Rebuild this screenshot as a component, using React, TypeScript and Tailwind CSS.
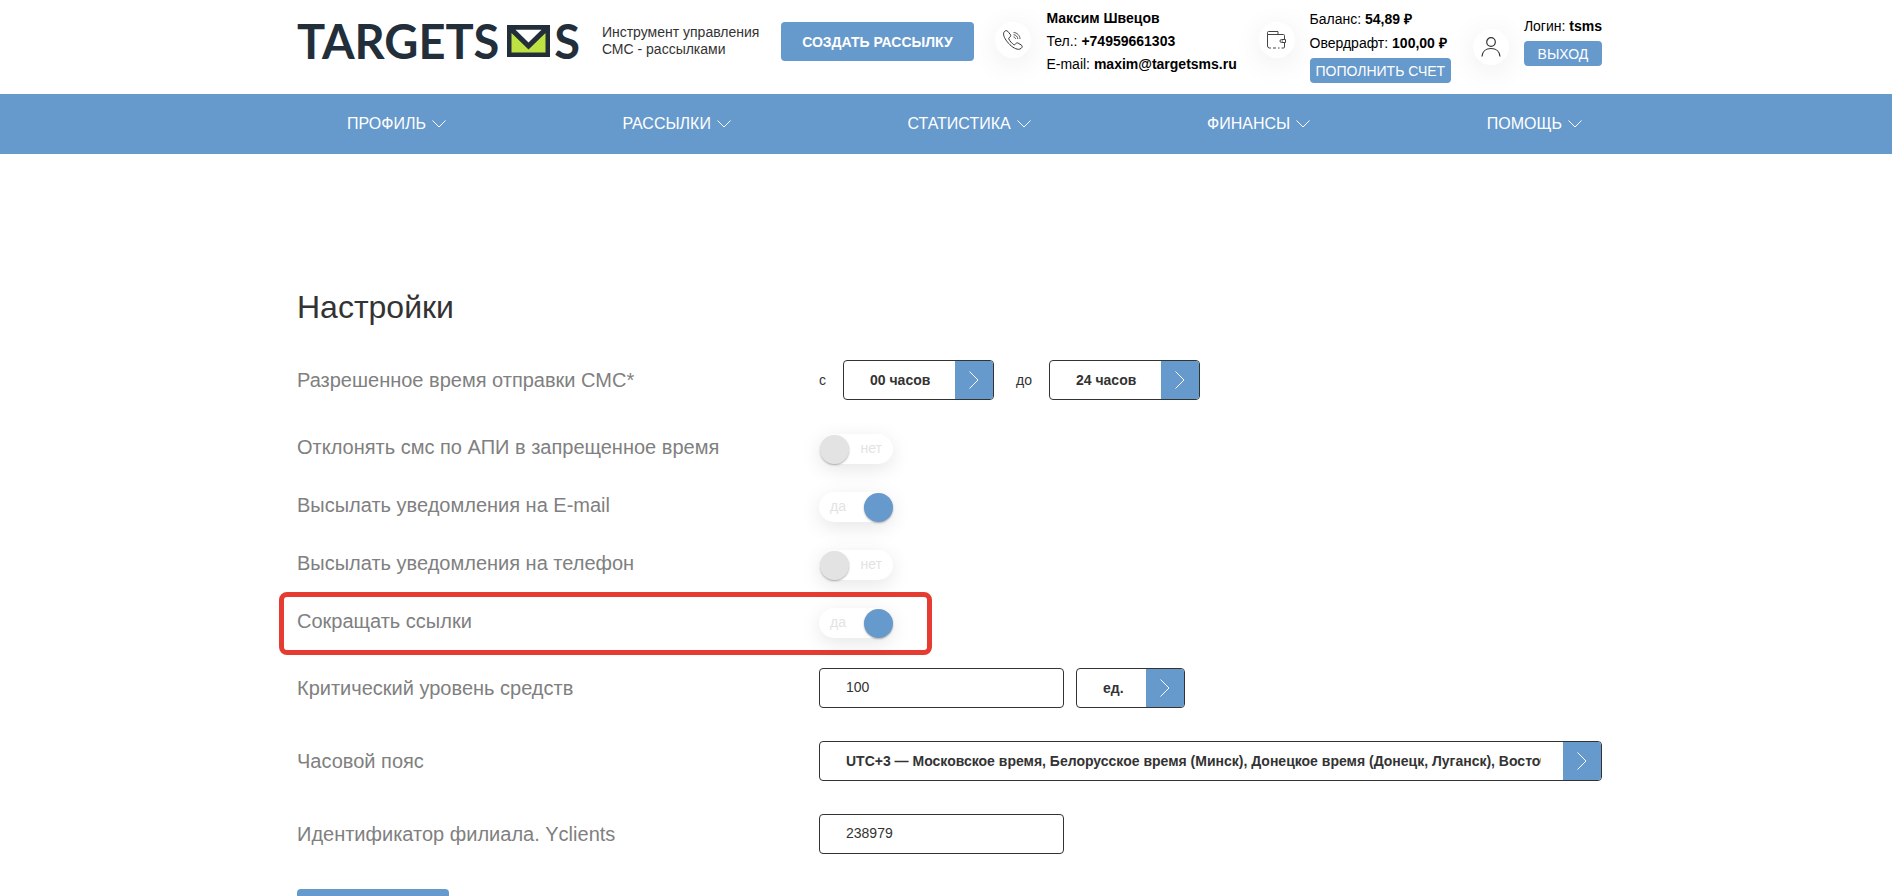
import { useState } from "react";
import type { ReactNode } from "react";
import clsx from "clsx";

const NAV_ITEMS = ["ПРОФИЛЬ", "РАССЫЛКИ", "СТАТИСТИКА", "ФИНАНСЫ", "ПОМОЩЬ"];

const TOGGLES = [
  { id: "reject-api", label: "Отклонять смс по АПИ в запрещенное время", on: false },
  { id: "notify-email", label: "Высылать уведомления на E-mail", on: true },
  { id: "notify-phone", label: "Высылать уведомления на телефон", on: false },
  { id: "short-links", label: "Сокращать ссылки", on: true, highlight: true },
];

function Logo() {
  return (
    <a href="#" className="flex items-center font-[Lato,sans-serif] text-[47px] leading-[46px] font-bold text-[#222e3a]">
      <span>TARGETS</span>
      <svg width="43" height="32" viewBox="0 0 43 32" className="mr-1 ml-2">
        <rect width="43" height="32" fill="#222e3a" />
        <path d="M4.500 8 21.500 24.500 38.500 8V27.500H4.500z" fill="#bfe243" />
        <path d="M8.500 4.700H34.500L21.500 17.500z" fill="#fff" />
      </svg>
      <span>S</span>
    </a>
  );
}

function PhoneIcon() {
  return (
    <svg width="22" height="22" viewBox="0 0 22 22" fill="none" stroke="#333" strokeWidth="1">
      <path d="M4.800 1.800C3.700 1.200 2.500 2.200 1.900 3.300 1 5.500 2 8.700 5.200 12.700 8.800 17.200 13 20.200 16.500 20.300c1.800 0 3.600-1.300 3.700-2.600.1-.8-.4-1.300-1-1.700l-3.100-1.900c-.9-.5-1.700-.3-2.300.5l-.7.9c-.4.4-.9.400-1.400.1-1.900-1.300-3.900-3.600-4.900-5.600-.2-.5-.1-1 .3-1.300l.9-.7c.7-.6.9-1.300.5-2.200L6.600 3.300c-.4-.8-1-1.200-1.800-1.500z" />
      <path d="M11.500 3.500c3.500 0 6.500 3 6.500 6.500M11.500 5.700c2.300 0 4.300 2 4.300 4.300M11.500 7.900c1.100 0 2.100 1 2.100 2.100" strokeWidth=".8" />
    </svg>
  );
}

function WalletIcon() {
  return (
    <svg width="20" height="18" viewBox="0 0 20 18" fill="none" stroke="#444" strokeWidth="1">
      <path d="M.5 3.500h16a1 1 0 0 1 1 1v4M.5 3.500V1.500a1 1 0 0 1 1-1h9.500v3M.5 3.500v11.500a2 2 0 0 0 2 2h1.500M6 17h3M11 17h1.500M14.500 17h2a1 1 0 0 0 1-1v-4.500" />
      <path d="M14.500 8.500h4v3h-4a1.500 1.500 0 0 1 0-3zM14.500 10h1.500" />
    </svg>
  );
}

function UserIcon() {
  return (
    <svg width="20" height="20" viewBox="0 0 20 20" fill="none" stroke="#333" strokeWidth="1.200">
      <circle cx="10" cy="5" r="4.300" />
      <path d="M1 19.500C1.300 14.500 5 11.500 10 11.500s8.700 3 9 8" />
    </svg>
  );
}

function IconCircle({ children }: { children: ReactNode }) {
  return (
    <span className="flex size-9 shrink-0 items-center justify-center rounded-full bg-white shadow-[0_5px_30px_rgba(0,0,0,0.08)]">
      {children}
    </span>
  );
}

function Select({ label, options, className }: { label: string; options: string[]; className?: string }) {
  return (
    <span className={clsx("relative inline-flex h-10", className)}>
      <select
        aria-label={label}
        className="w-full appearance-none rounded border border-[#333] bg-white pr-[60px] pl-[26px] text-sm font-bold text-[#333] outline-none"
      >
        {options.map((option) => (
          <option key={option}>{option}</option>
        ))}
      </select>
      <span className="pointer-events-none absolute inset-y-px right-px flex w-[38px] items-center justify-center rounded-r-[3px] bg-[#6699cc]">
        <svg width="10" height="18" viewBox="0 0 10 18" fill="none" stroke="#fff">
          <path d="M.5.500 9 9 .5 17.500" />
        </svg>
      </span>
    </span>
  );
}

function TextField({ id, value }: { id: string; value: string }) {
  return (
    <input
      id={id}
      type="text"
      defaultValue={value}
      className="h-10 w-[245px] rounded border border-[#333] bg-white px-[26px] pb-0.5 text-sm text-[#333] outline-none"
    />
  );
}

function Toggle({ id, initial }: { id: string; initial: boolean }) {
  const [on, setOn] = useState(initial);

  return (
    <label className="relative block h-[30px] w-[74px] cursor-pointer rounded-full bg-white text-sm leading-[28px] text-[#e3e3e3] shadow-[0_5px_20px_rgba(0,0,0,0.1)]">
      <input id={id} type="checkbox" checked={on} onChange={() => setOn(!on)} className="sr-only" />
      <span className={clsx("block px-[11px]", on ? "text-left" : "text-right")}>{on ? "да" : "нет"}</span>
      <span
        className={clsx(
          "absolute top-px size-[29px] rounded-full shadow-[0_1px_2px_rgba(0,0,0,0.3)]",
          on ? "right-0 bg-[#6699cc]" : "left-px bg-[#e3e3e3]",
        )}
      />
    </label>
  );
}

function Row({ label, htmlFor, children }: { label: string; htmlFor?: string; children: ReactNode }) {
  return (
    <div className="flex items-center">
      <label htmlFor={htmlFor} className="w-2/5 text-xl leading-6 text-[#808080]">
        {label}
      </label>
      <div className="flex w-3/5 items-center">{children}</div>
    </div>
  );
}

export default function App() {
  return (
    <div className="h-screen overflow-hidden bg-white font-['Liberation_Sans',Arial,sans-serif] text-[#333]">
      {/* Header */}
      <header className="pl-[7px]">
        <div className="mx-auto flex h-[94px] max-w-[1305px] items-start justify-between text-sm text-black">
          <div className="pt-[18px]">
            <Logo />
          </div>
          <p className="pt-6 leading-[17px] text-[#333]">
            Инструмент управления
            <br />
            СМС - рассылками
          </p>
          <button type="button" className="mt-[22px] h-[39px] rounded bg-[#6699cc] px-[21px] font-bold text-white">
            СОЗДАТЬ РАССЫЛКУ
          </button>
          <div className="flex gap-[15px]">
            <div className="pt-[22px]">
              <IconCircle>
                <PhoneIcon />
              </IconCircle>
            </div>
            <div className="pt-[7px] leading-[23px]">
              <p className="font-bold">Максим Швецов</p>
              <p>
                Тел.: <b>+74959661303</b>
              </p>
              <p>
                E-mail: <b>maxim@targetsms.ru</b>
              </p>
            </div>
          </div>
          <div className="flex gap-[15px]">
            <div className="pt-[22px]">
              <IconCircle>
                <WalletIcon />
              </IconCircle>
            </div>
            <div className="pt-[7px] leading-6">
              <p>
                Баланс: <b>54,89 ₽</b>
              </p>
              <p>
                Овердрафт: <b>100,00 ₽</b>
              </p>
              <button type="button" className="mt-[3px] block h-[25px] w-full rounded bg-[#6699cc] px-1.5 leading-none text-white">
                ПОПОЛНИТЬ СЧЕТ
              </button>
            </div>
          </div>
          <div className="flex gap-[15px]">
            <div className="pt-[29px]">
              <IconCircle>
                <UserIcon />
              </IconCircle>
            </div>
            <div className="pt-[14px] leading-6">
              <p>
                Логин: <b>tsms</b>
              </p>
              <button type="button" className="mt-[3px] block h-[25px] w-full rounded bg-[#6699cc] leading-none text-white">
                ВЫХОД
              </button>
            </div>
          </div>
        </div>
      </header>

      {/* Navigation */}
      <nav className="relative bg-[#6699cc] pl-[7px]">
        <div className="mx-auto flex h-[60px] max-w-[1305px] items-center justify-between pr-5 pl-[50px]">
          {NAV_ITEMS.map((item) => (
            <a key={item} href="#" className="flex items-center gap-1.5 text-base text-white">
              {item}
              <svg width="14" height="8" viewBox="0 0 14 8" fill="none" stroke="#fff">
                <path d="M.5.500 7 7 13.500.5" />
              </svg>
            </a>
          ))}
        </div>
      </nav>

      {/* Settings form */}
      <main className="pl-[7px]">
        <form className="mx-auto max-w-[1305px] pt-[133px]">
          <h1 className="text-[32px] leading-10">Настройки</h1>

          <div className="mt-[33px]">
            <Row label="Разрешенное время отправки СМС*">
              <span className="text-sm">с</span>
              <Select label="Время с" options={["00 часов"]} className="ml-[17px] w-[151px]" />
              <span className="ml-[22px] text-sm">до</span>
              <Select label="Время до" options={["24 часов"]} className="ml-[17px] w-[151px]" />
            </Row>
          </div>

          <div className="mt-[34px] flex flex-col gap-7">
            {TOGGLES.map(({ id, label, on, highlight }) => (
              <div key={id} className="relative flex items-start">
                {highlight && (
                  <span className="pointer-events-none absolute -top-4 -bottom-[17px] -left-[18px] w-[653px] rounded-lg border-5 border-[#e53b30]" />
                )}
                <label htmlFor={id} className="w-2/5 text-xl leading-[26px] text-[#808080]">
                  {label}
                </label>
                <Toggle id={id} initial={on} />
              </div>
            ))}
          </div>

          <div className="mt-[30px] flex flex-col gap-[33px]">
            <Row label="Критический уровень средств" htmlFor="critical-level">
              <TextField id="critical-level" value="100" />
              <Select label="Единицы" options={["ед."]} className="ml-3" />
            </Row>
            <Row label="Часовой пояс">
              <Select
                label="Часовой пояс"
                options={[
                  "UTC+3 — Московское время, Белорусское время (Минск), Донецкое время (Донецк, Луганск), Восточноевропейское время",
                ]}
                className="w-full"
              />
            </Row>
            <Row label="Идентификатор филиала. Yclients" htmlFor="branch-id">
              <TextField id="branch-id" value="238979" />
            </Row>
          </div>

          <button type="button" aria-label="Сохранить" className="mt-[35px] h-10 w-[152px] rounded bg-[#6699cc]" />
        </form>
      </main>
    </div>
  );
}
